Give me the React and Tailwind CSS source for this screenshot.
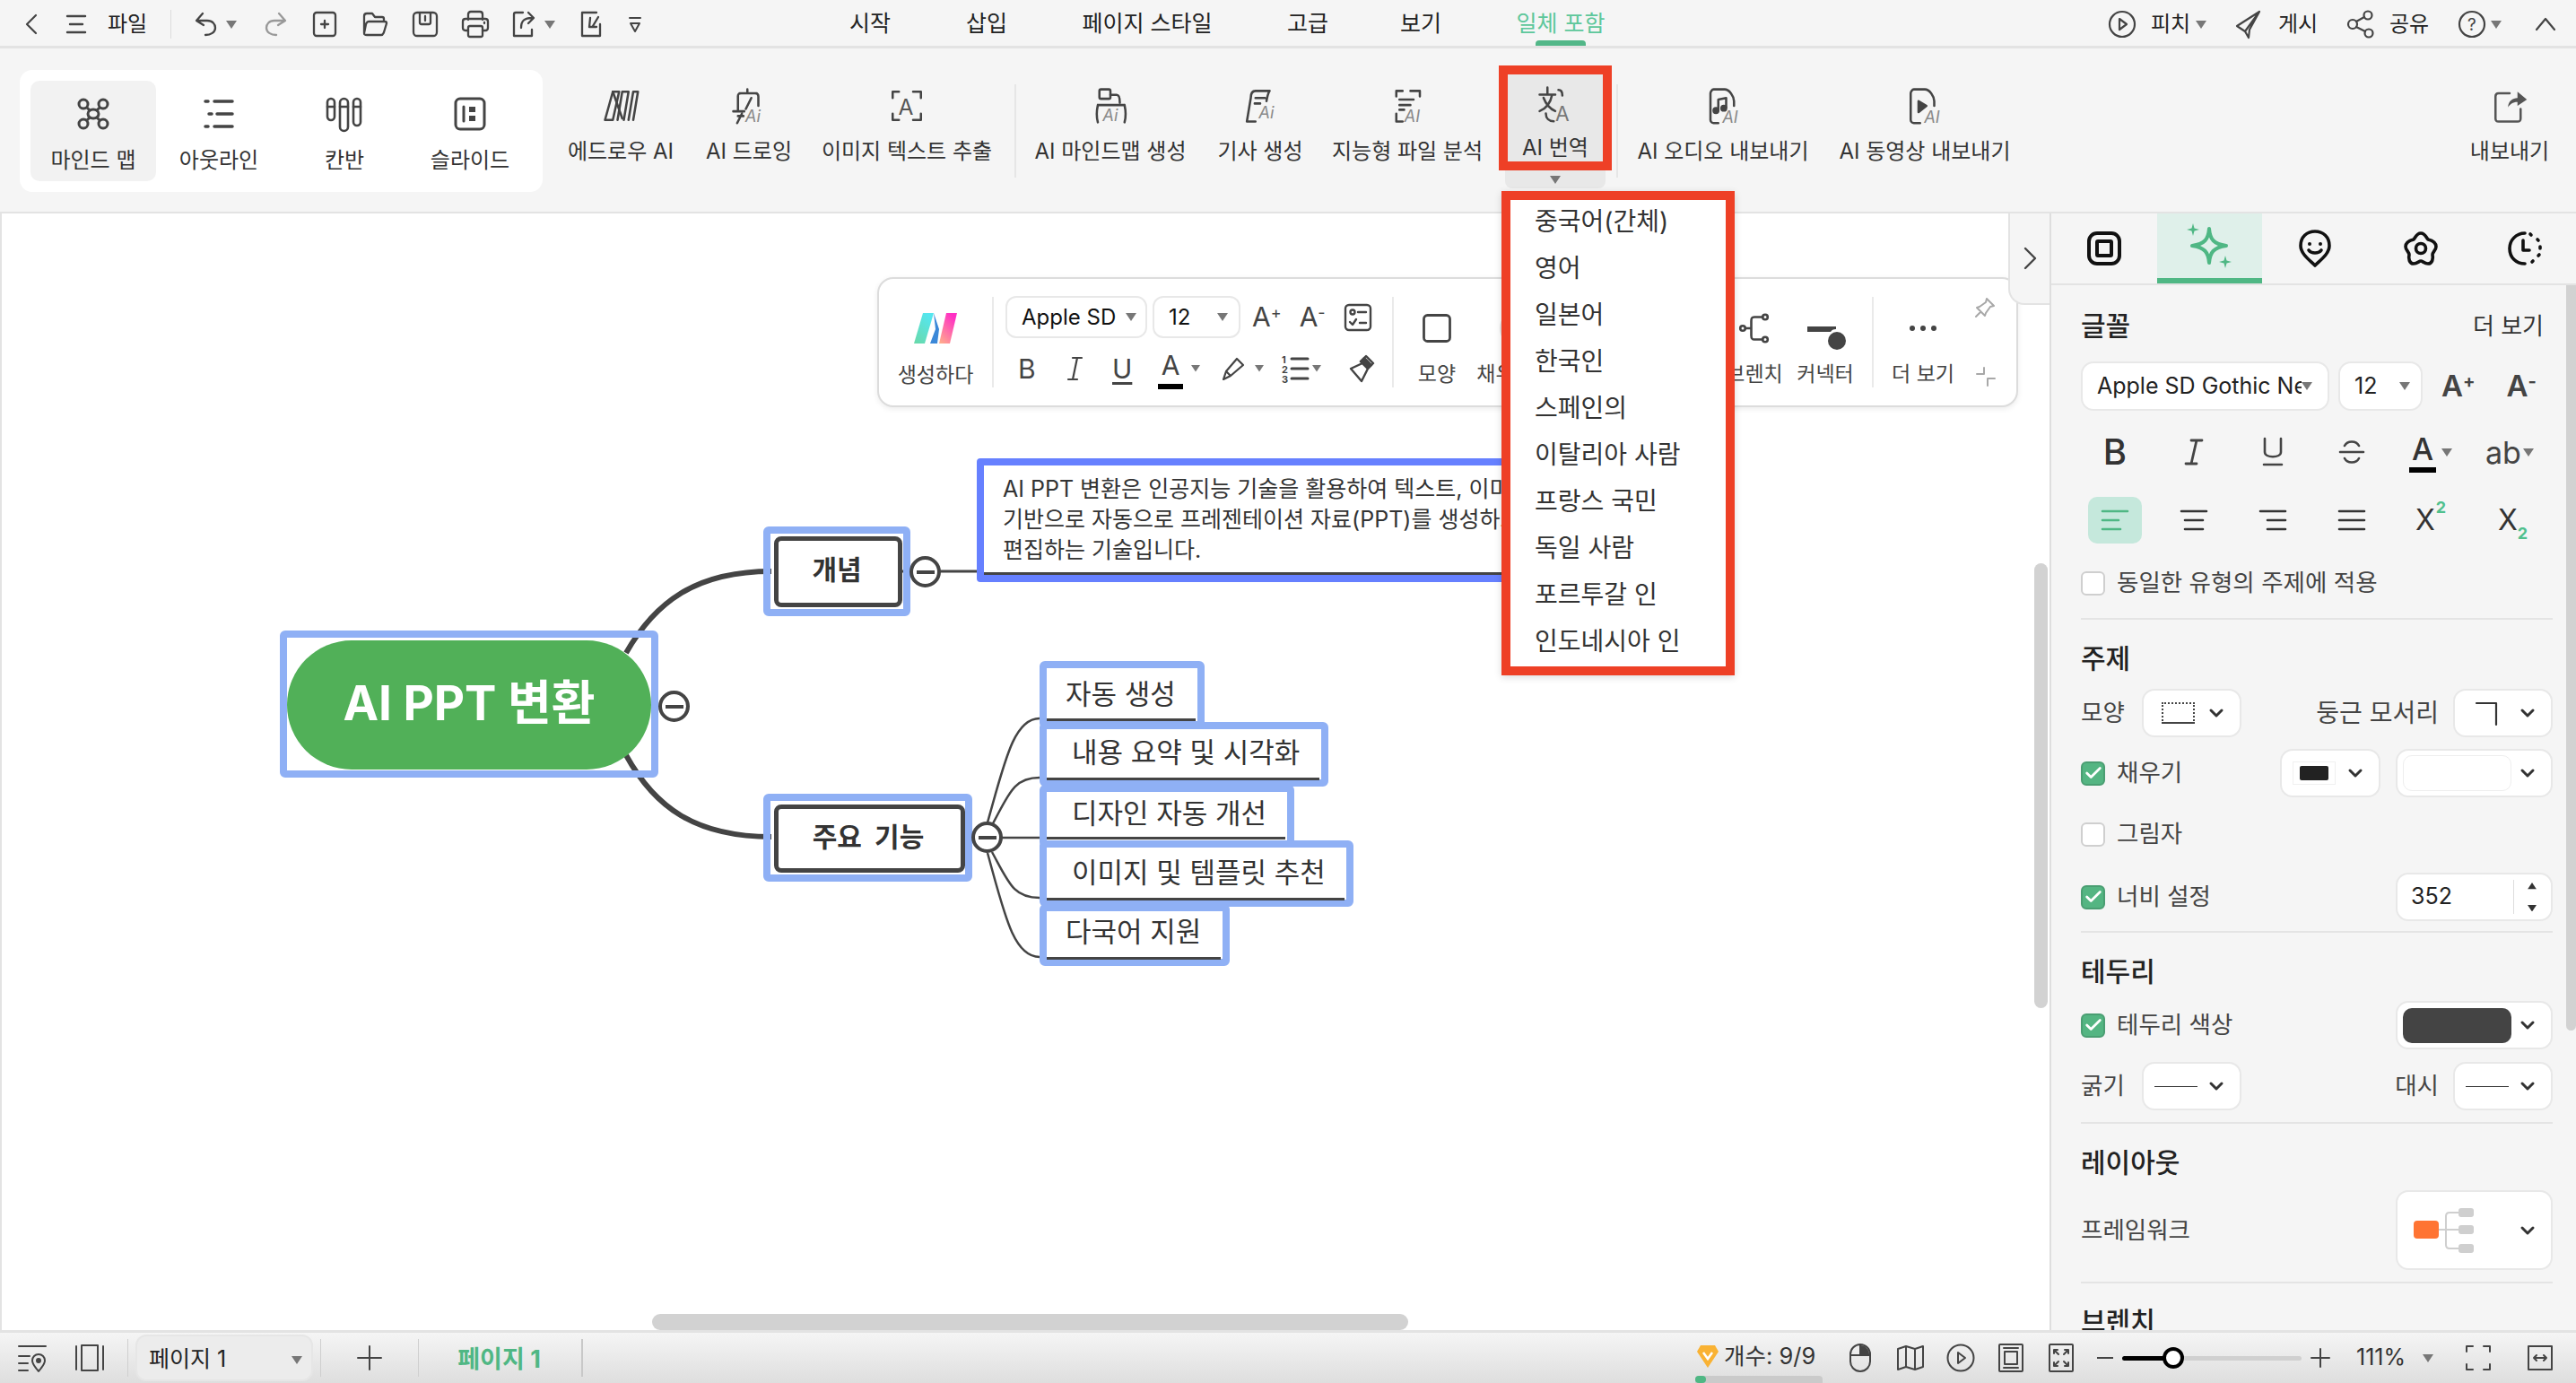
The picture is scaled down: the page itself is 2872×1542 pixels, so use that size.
import { ChevronDown, Check as CheckIcon } from "lucide-react";

const Svg = ({ s = 40, h, sw = 2.5, c = "#444", vb, children }) => (
  <svg
    width={s}
    height={h || s}
    viewBox={vb || `0 0 ${s} ${h || s}`}
    fill="none"
    stroke={c}
    strokeWidth={sw}
    strokeLinecap="round"
    strokeLinejoin="round"
    overflow="visible"
  >
    {children}
  </svg>
);

const Caret = ({ w = 12, c = "#777" }) => (
  <svg width={w} height={w * 0.75} viewBox="0 0 12 9">
    <path d="M0 0H12L6 9Z" fill={c} />
  </svg>
);

const Ai = ({ x, y, t = "Ai", size = 21 }) => (
  <text
    x={x}
    y={y}
    fontSize={size}
    fontStyle="italic"
    fontFamily="Inter, sans-serif"
    fill="#8a8a8a"
    stroke="none"
  >
    {t}
  </text>
);

/* ribbon icons: drawn on a 48 box and shown at 42 */
const RIcon = ({ children, c }) => (
  <Svg s={42} sw={2.9} c={c} vb="0 0 48 48">
    {children}
  </Svg>
);

const MindIcon = () => (
  <Svg s={38} sw={3}>
    <circle cx="8" cy="8" r="5" />
    <circle cx="30" cy="8" r="5" />
    <circle cx="8" cy="30" r="5" />
    <circle cx="30" cy="30" r="5" />
    <path d="M12 12L15 15M26 12L23 15M12 26L15 23M26 26L23 23" />
    <ellipse cx="19" cy="19" rx="6" ry="5" />
  </Svg>
);
const OutlineIcon = () => (
  <Svg s={38} sw={3.5}>
    <path d="M4 5H7M14 5H34M8 19H11M17 19H34M4 33H7M14 33H34" />
  </Svg>
);
const KanbanIcon = () => (
  <Svg s={42} sw={2.6}>
    <rect x="2" y="4" width="8" height="24" rx="4" />
    <rect x="16" y="4" width="9" height="36" rx="4.5" />
    <rect x="31" y="4" width="8" height="30" rx="4" />
    <path d="M2 13H10M16 13H25M31 13H39" />
  </Svg>
);
const SlideIcon = () => (
  <Svg s={38} sw={3}>
    <rect x="3" y="2" width="32" height="34" rx="5" />
    <path d="M12 11V27" />
    <rect x="18" y="11" width="7" height="6" fill="#444" stroke="none" />
    <rect x="18" y="21" width="7" height="6" fill="#444" stroke="none" />
  </Svg>
);
const EdrawIcon = () => (
  <RIcon>
    <path d="M4 42L14 6H22L14 42ZM20 42L26 6H34L28 42M34 42L40 6H46L40 42" />
    <path d="M14 6L26 40" />
  </RIcon>
);
const DrawIcon = () => (
  <RIcon>
    <path d="M12 8H34M22 3V8M14 8C10 8 10 10 10 12V30M32 8C35 8 36 10 36 12V24" />
    <path d="M27 14L20 28" />
    <path d="M4 31H18M10 37H17M9 46L15 34" />
    <Ai x={19} y={45} />
  </RIcon>
);
const ExtractIcon = () => (
  <RIcon>
    <path d="M6 14V6H14M32 6H42V14M6 34V42H14M32 42H42V34" />
    <text x="13" y="35" fontSize="28" fontFamily="Inter, sans-serif" fill="#555" stroke="none">
      A
    </text>
  </RIcon>
);
const AiMindIcon = () => (
  <RIcon>
    <rect x="10" y="3" width="14" height="12" rx="2" />
    <path d="M24 10H32C36 10 36 16 36 20M8 23H42M8 23C6 32 6 38 8 45M42 23C44 32 44 38 42 45" />
    <Ai x={14} y={43} />
  </RIcon>
);
const ArticleIcon = () => (
  <RIcon>
    <path d="M36 5H18C14 5 12 8 12 14L7 44H18M36 5C34 8 33 12 32 18M18 14H30M17 21H24" />
    <Ai x={22} y={40} />
  </RIcon>
);
const AnalysisIcon = () => (
  <RIcon>
    <path d="M10 12V5H18M28 5H40V12M10 34V44H18M14 16H32M14 23H28M14 29H20" />
    <Ai x={20} y={44} t="AI" />
  </RIcon>
);
const TranslateIcon = () => (
  <RIcon>
    <path d="M4 12H24M14 3V12M20 12C18 22 12 30 4 33M9 16C12 24 17 30 24 33" />
    <path d="M28 6C32 6 33 10 33 13M12 36C12 42 16 46 22 46" />
    <text x="24" y="46" fontSize="26" fontFamily="Inter, sans-serif" fill="#777" stroke="none">
      A
    </text>
  </RIcon>
);
const AudioIcon = () => (
  <RIcon>
    <path d="M18 46H12C10 46 8 44 8 42V8C8 6 10 3 12 3H26C32 3 38 12 38 18V24" />
    <path d="M18 30V16L28 14V26" />
    <circle cx="15" cy="30" r="3" fill="#444" />
    <circle cx="25" cy="27" r="3" fill="#444" />
    <Ai x={23} y={46} t="AI" />
  </RIcon>
);
const VideoIcon = () => (
  <RIcon>
    <path d="M18 46H10C8 46 6 44 6 42V8C6 6 8 3 10 3H24C30 3 36 12 36 18V24" />
    <path d="M16 18L26 24L16 32Z" fill="#444" />
    <Ai x={23} y={46} t="AI" />
  </RIcon>
);
const ExportIcon = () => (
  <RIcon c="#555">
    <path d="M24 8H10C7 8 6 10 6 12V40C6 44 8 44 10 44H34C38 44 38 42 38 40V28" />
    <path d="M22 26C22 18 28 14 34 14V6L46 16L34 24V19C28 19 24 22 22 26Z" fill="#555" stroke="none" />
  </RIcon>
);

/* right panel tab icons */
const TabFrame = () => (
  <Svg s={40} sw={4} c="#111">
    <rect x="3" y="3" width="34" height="34" rx="9" />
    <rect x="12" y="12" width="16" height="16" rx="1" />
  </Svg>
);
const TabSpark = () => (
  <svg width="52" height="52" viewBox="0 0 52 52" fill="none" stroke="#4fb784" strokeWidth="4">
    <path d="M26 7C27 19 31 24 45 26C31 28 27 33 26 45C25 33 21 28 7 26C21 24 25 19 26 7Z" strokeLinejoin="round" />
    <path d="M8 1L9.5 6.5L15 8L9.5 9.5L8 15L6.5 9.5L1 8L6.5 6.5Z" fill="#4fb784" stroke="none" />
    <path d="M44 37L45.5 42.5L51 44L45.5 45.5L44 51L42.5 45.5L37 44L42.5 42.5Z" fill="#4fb784" stroke="none" />
  </svg>
);
const TabPin = () => (
  <Svg s={40} sw={3.6} c="#111" h={44}>
    <path d="M20 41C14 35 4 28 4 19C4 9 11 3 20 3C29 3 36 9 36 19C36 28 26 35 20 41Z" />
    <circle cx="14" cy="17" r="2" fill="#111" stroke="none" />
    <circle cx="26" cy="17" r="2" fill="#111" stroke="none" />
    <path d="M13 24C16 28 24 28 27 24" />
  </Svg>
);
const TabFlower = () => (
  <Svg s={40} sw={3.6} c="#111">
    <path d="M20 3C25 3 26 8 28 10C32 11 37 13 37 18C37 22 33 24 33 27C34 31 33 37 28 37C24 37 22 34 20 34C18 34 16 37 12 37C7 37 6 31 7 27C7 24 3 22 3 18C3 13 8 11 12 10C14 8 15 3 20 3Z" />
    <circle cx="20" cy="20" r="5.5" />
  </Svg>
);
const TabClock = () => (
  <Svg s={40} sw={3.6} c="#111">
    <path d="M20 3C10 3 3 11 3 20C3 30 10 37 20 37" />
    <path d="M26 4L27 5M34 10L35 11M37 18V20M36 27L35 28M29 34L28 35" />
    <path d="M18 11V22H25" />
  </Svg>
);

/* small shared widgets */
const Checkbox = ({ on }) =>
  on ? (
    <span className="flex h-[27px] w-[27px] shrink-0 items-center justify-center rounded-[6px] border-2 border-[#4a9e72] bg-[#54b582]">
      <CheckIcon size={22} color="#fff" strokeWidth={3} />
    </span>
  ) : (
    <span className="h-[27px] w-[27px] shrink-0 rounded-[6px] border-2 border-[#cfcfcf] bg-white" />
  );

const Chev = () => <ChevronDown size={24} color="#333" strokeWidth={3} />;

const Title = ({ children }) => (
  <div className="flex h-[46px] items-center text-[30px] font-medium text-[#222]">{children}</div>
);

const Divider = ({ className }) => <div className={`h-[2px] bg-[#e4e4e4] ${className}`} />;

const GroupItem = ({ icon, label, active }) => (
  <div
    className={`flex h-[112px] w-[140px] shrink-0 flex-col items-center rounded-[10px] pt-[15px] ${
      active ? "bg-[#f2f2f2]" : ""
    }`}
  >
    <div className="flex h-[44px] items-center justify-center">{icon}</div>
    <div className="mt-[15px] h-[30px] text-[24px] leading-[30px] whitespace-nowrap text-[#333]">{label}</div>
  </div>
);

const RibbonItem = ({ icon, label, className }) => (
  <div className={`flex h-[117px] shrink-0 flex-col items-center pt-[21px] ${className}`}>
    <div className="flex h-[48px] items-center justify-center">{icon}</div>
    <div className="mt-[12px] h-[30px] text-[24px] leading-[30px] whitespace-nowrap text-[#333]">{label}</div>
  </div>
);

const languages = [
  "중국어(간체)",
  "영어",
  "일본어",
  "한국인",
  "스페인의",
  "이탈리아 사람",
  "프랑스 국민",
  "독일 사람",
  "포르투갈 인",
  "인도네시아 인",
];

const TopBar = () => (
  <div className="flex h-[54px] shrink-0 items-center border-b-[3px] border-[#e3e3e3] bg-[#f5f5f5] pl-[16px] pr-[14px] pt-[3px] text-[#222]">
    <div className="flex w-[40px] justify-center">
      <Svg s={28} sw={2.2}>
        <path d="M18 4L8 14L18 24" />
      </Svg>
    </div>
    <div className="flex w-[58px] justify-center">
      <Svg s={28} sw={2.4}>
        <path d="M4 5H24M7 14H21M4 23H24" />
      </Svg>
    </div>
    <div className="w-[56px] text-center text-[24px]">파일</div>
    <div className="ml-[20px] h-[32px] w-px bg-[#dcdcdc]" />
    <div className="ml-[21px] flex w-[36px] justify-center">
      <Svg s={30} sw={2.3}>
        <path d="M11 3L4 11L12 16M5 11H16C22 11 25 15 25 19C25 24 20 27 14 27" />
      </Svg>
    </div>
    <div className="flex w-[20px] justify-center">
      <Caret />
    </div>
    <div className="ml-[9px] flex w-[60px] justify-center">
      <Svg s={30} sw={2.3} c="#999">
        <path d="M19 3L26 11L18 16M25 11H14C8 11 5 15 5 19C5 24 10 27 16 27" />
      </Svg>
    </div>
    <div className="flex w-[50px] justify-center">
      <Svg s={30} sw={2.3}>
        <rect x="3" y="2" width="24" height="26" rx="3" />
        <path d="M15 11V19M11 15H19" />
      </Svg>
    </div>
    <div className="flex w-[62px] justify-center">
      <Svg s={32} sw={2.3}>
        <path d="M4 26V7C4 5 5 4 7 4H13L16 8H24C26 8 26 9 26 10V13M4 26C4 28 5 28 7 28H23C25 28 25 27 26 25L29 15C29 13 28 13 27 13H9C7 13 7 14 6 16Z" />
      </Svg>
    </div>
    <div className="flex w-[50px] justify-center">
      <Svg s={30} sw={2.3}>
        <rect x="2" y="2" width="26" height="26" rx="4" />
        <path d="M9 3V13C9 15 10 15 11 15H19C20 15 21 15 21 13V3M15 6V11" />
      </Svg>
    </div>
    <div className="flex w-[62px] justify-center">
      <Svg s={32} sw={2.3}>
        <path d="M8 11V5C8 3 9 2 11 2H21C23 2 24 3 24 5V11M8 23H5C3 23 2 22 2 20V13C2 11 3 10 5 10H27C29 10 30 11 30 13V20C30 22 29 23 27 23H24" />
        <rect x="8" y="18" width="16" height="12" rx="2" />
        <path d="M26 14V15" />
      </Svg>
    </div>
    <div className="ml-[4px] flex w-[40px] justify-center">
      <Svg s={32} sw={2.3}>
        <path d="M14 3H6C5 3 4 4 4 5V29H24V22M12 20C12 12 16 9 24 9M20 3L26 9L20 15" />
      </Svg>
    </div>
    <div className="flex w-[16px] justify-center">
      <Caret />
    </div>
    <div className="flex w-[80px] justify-center">
      <Svg s={32} sw={2.3}>
        <path d="M20 3H4V29H24V16M22 8L16 18M13 9L12 19L20 19" />
      </Svg>
    </div>
    <div className="flex w-[14px] justify-center">
      <Svg s={14} h={22} sw={2}>
        <path d="M1 4H13M2 10H12L7 19Z" />
      </Svg>
    </div>

    <div className="ml-[190px] w-[130px] text-center text-[25px]">시작</div>
    <div className="w-[130px] text-center text-[25px]">삽입</div>
    <div className="w-[228px] text-center text-[25px]">페이지 스타일</div>
    <div className="w-[130px] text-center text-[25px]">고급</div>
    <div className="w-[122px] text-center text-[25px]">보기</div>
    <div className="relative flex h-full w-[190px] items-center justify-center text-[25px] text-[#5dc79b]">
      일체 포함
      <span className="absolute bottom-0 left-[67px] h-[6px] w-[56px] rounded-t-[4px] bg-[#52b788]" />
    </div>

    <div className="ml-auto flex w-[52px] justify-center">
      <Svg s={32} sw={2.2}>
        <circle cx="16" cy="16" r="14" />
        <path d="M13 10L21 16L13 22Z" />
      </Svg>
    </div>
    <div className="w-[56px] text-center text-[24px]">피치</div>
    <div className="flex w-[12px] justify-center">
      <Caret />
    </div>
    <div className="ml-[22px] flex w-[50px] justify-center">
      <Svg s={32} sw={2.2}>
        <path d="M28 2L3 18L12 24L16 31L17 22L28 2ZM12 24L28 2" />
      </Svg>
    </div>
    <div className="w-[60px] text-center text-[24px]">게시</div>
    <div className="ml-[20px] flex w-[40px] justify-center">
      <Svg s={32} sw={2.2}>
        <circle cx="7" cy="16" r="5" />
        <circle cx="24" cy="6" r="4.5" />
        <circle cx="25" cy="26" r="4.5" />
        <path d="M11 13L20 8M11 19L21 24" />
      </Svg>
    </div>
    <div className="w-[68px] text-center text-[24px]">공유</div>
    <div className="ml-[16px] flex w-[40px] justify-center">
      <Svg s={32} sw={2.2}>
        <circle cx="16" cy="16" r="14" />
        <text x="11" y="23" fontSize="19" fontFamily="Inter, sans-serif" fill="#444" stroke="none">
          ?
        </text>
      </Svg>
    </div>
    <div className="flex w-[14px] justify-center">
      <Caret />
    </div>
    <div className="ml-[28px] flex w-[40px] justify-center">
      <Svg s={28} sw={2.2}>
        <path d="M4 20L14 8L24 20" />
      </Svg>
    </div>
  </div>
);

const Ribbon = () => (
  <div className="flex h-[184px] shrink-0 items-start border-b-[2px] border-[#e3e3e3] bg-[#f5f5f5] pl-[22px] pr-[24px]">
    <div className="mt-[24px] flex h-[136px] w-[583px] shrink-0 items-center rounded-[14px] bg-white pl-[12px]">
      <GroupItem icon={<MindIcon />} label="마인드 맵" active />
      <GroupItem icon={<OutlineIcon />} label="아웃라인" />
      <GroupItem icon={<KanbanIcon />} label="칸반" />
      <GroupItem icon={<SlideIcon />} label="슬라이드" />
    </div>
    <div className="ml-[15px] mt-[19px] flex">
      <RibbonItem icon={<EdrawIcon />} label="에드로우 AI" className="w-[144px]" />
      <RibbonItem icon={<DrawIcon />} label="AI 드로잉" className="w-[142px]" />
      <RibbonItem icon={<ExtractIcon />} label="이미지 텍스트 추출" className="w-[210px]" />
      <div className="ml-[15px] mt-[21px] h-[104px] w-[2px] bg-[#e6e6e6]" />
      <RibbonItem icon={<AiMindIcon />} label="AI 마인드맵 생성" className="w-[210px]" />
      <RibbonItem icon={<ArticleIcon />} label="기사 생성" className="w-[124px]" />
      <RibbonItem icon={<AnalysisIcon />} label="지능형 파일 분석" className="w-[204px]" />
      <div className="relative w-[126px] shrink-0">
        <div className="flex h-[117px] flex-col items-center border-[10px] border-[#ee4026] bg-[#e8e8e8] pt-[11px]">
          <div className="flex h-[48px] items-center justify-center">
            <TranslateIcon />
          </div>
          <div className="mt-[12px] text-[24px] leading-[30px] whitespace-nowrap text-[#333]">AI 번역</div>
        </div>
        <div className="mx-[7px] flex h-[20px] items-center justify-center rounded-b-[8px] bg-[#e8e8e8]">
          <Caret />
        </div>
      </div>
      <div className="ml-[5px] mt-[21px] h-[104px] w-[2px] bg-[#e6e6e6]" />
      <RibbonItem icon={<AudioIcon />} label="AI 오디오 내보내기" className="ml-[3px] w-[228px]" />
      <RibbonItem icon={<VideoIcon />} label="AI 동영상 내보내기" className="w-[222px]" />
    </div>
    <div className="ml-auto mt-[19px]">
      <RibbonItem icon={<ExportIcon />} label="내보내기" className="w-[100px]" />
    </div>
  </div>
);

const FloatingBar = () => (
  <div className="absolute left-[978px] top-[71px] z-10 flex h-[145px] w-[1272px] items-stretch rounded-[18px] border-2 border-[#dcdcdc] bg-white shadow-[0_2px_6px_rgba(0,0,0,0.08)]">
    <div className="flex w-[126px] shrink-0 flex-col items-center pt-[38px]">
      <svg width="48" height="34" viewBox="0 0 48 34">
        <defs>
          <linearGradient id="mLeft" x1="0" y1="1" x2="0.6" y2="0">
            <stop offset="0" stopColor="#6ad9a8" />
            <stop offset="1" stopColor="#55e6ee" />
          </linearGradient>
          <linearGradient id="mRight" x1="0" y1="1" x2="0.6" y2="0">
            <stop offset="0" stopColor="#ffb28a" />
            <stop offset="1" stopColor="#ff2fc4" />
          </linearGradient>
        </defs>
        <path d="M10 0H22L12 34H0Z" fill="url(#mLeft)" />
        <path d="M22 0L28 18L26 34H18L24 18Z" fill="#3b88d8" />
        <path d="M36 0H48L40 34H28Z" fill="url(#mRight)" />
      </svg>
      <div className="mt-[20px] text-[23px] leading-[30px] text-[#444]">생성하다</div>
    </div>
    <div className="my-[20px] w-[2px] bg-[#eaeaea]" />
    <div className="w-[444px] shrink-0 pl-[13px] pt-[19px]">
      <div className="flex h-[47px] items-center">
        <div className="flex h-[47px] w-[158px] items-center justify-between rounded-[12px] border-2 border-[#e8e8e8] pl-[16px] pr-[10px] text-[24px] text-[#111]">
          Apple SD
          <Caret />
        </div>
        <div className="ml-[6px] flex h-[47px] w-[98px] items-center justify-between rounded-[12px] border-2 border-[#e8e8e8] pl-[16px] pr-[12px] text-[24px] text-[#111]">
          12
          <Caret />
        </div>
        <div className="ml-[13px] text-[30px] text-[#444]">
          A<sup className="text-[18px]">+</sup>
        </div>
        <div className="ml-[20px] text-[30px] text-[#444]">
          A<sup className="text-[18px]">-</sup>
        </div>
        <div className="ml-[20px]">
          <Svg s={32} sw={2.4} vb="0 0 32 32">
            <rect x="2" y="2" width="28" height="28" rx="4" />
            <circle cx="10" cy="10" r="2.5" />
            <path d="M16 10H25M7 21L10 24L14 18M18 22H25" />
          </Svg>
        </div>
      </div>
      <div className="mt-[10px] flex h-[48px] items-center text-[#444]">
        <div className="ml-[14px] w-[50px] text-[30px]">B</div>
        <div className="ml-[1px] w-[50px]">
          <Svg s={24} h={30} sw={2.2}>
            <path d="M10 3H20M15 3L10 27M5 27H15" />
          </Svg>
        </div>
        <div className="ml-[4px] w-[44px] text-[30px] underline underline-offset-4">U</div>
        <div className="ml-[6px] relative h-[46px] w-[30px] text-[30px] leading-[38px] text-center">
          A<span className="absolute bottom-0 left-[1px] h-[6px] w-[28px] bg-black" />
        </div>
        <div className="ml-[8px]">
          <Caret w={10} />
        </div>
        <div className="ml-[23px]">
          <Svg s={28} sw={2.2}>
            <path d="M18 3L25 10L11 22L6 17ZM6 17L3 26L11 22" />
          </Svg>
        </div>
        <div className="ml-[10px]">
          <Caret w={10} />
        </div>
        <div className="ml-[20px]">
          <Svg s={32} sw={3}>
            <path d="M11 5H29M11 16H29M11 27H29" />
            <text x="0" y="10" fontSize="11" fontWeight="700" fontFamily="Inter, sans-serif" fill="#444" stroke="none">1</text>
            <text x="0" y="21" fontSize="11" fontWeight="700" fontFamily="Inter, sans-serif" fill="#444" stroke="none">2</text>
            <text x="0" y="32" fontSize="11" fontWeight="700" fontFamily="Inter, sans-serif" fill="#444" stroke="none">3</text>
          </Svg>
        </div>
        <div className="ml-[2px]">
          <Caret w={10} />
        </div>
        <div className="ml-[28px]">
          <Svg s={32} sw={2.4}>
            <path d="M22 2L30 10L24 16L16 8ZM18 10L5 16L17 30L24 16" fill="none" />
            <path d="M20 4L28 12L24 16L16 8Z" fill="#444" />
          </Svg>
        </div>
      </div>
    </div>
    <div className="my-[20px] w-[2px] bg-[#eaeaea]" />
    <div className="ml-[5px] flex w-[86px] shrink-0 flex-col items-center pt-[39px]">
      <Svg s={32} sw={2.8}>
        <rect x="1.5" y="1.5" width="29" height="29" rx="4" />
      </Svg>
      <div className="mt-[20px] text-[23px] leading-[30px] text-[#444]">모양</div>
    </div>
    <div className="flex w-[66px] shrink-0 flex-col items-center pt-[34px]">
      <div className="ml-[30px] h-[42px] w-[42px] shrink-0 rounded-full border-2 border-[#e6e6e6]" />
      <div className="mt-[15px] text-[23px] leading-[30px] whitespace-nowrap text-[#444]">채우기</div>
    </div>
    <div className="ml-auto flex w-[80px] shrink-0 flex-col items-center pt-[39px]">
      <Svg s={34} h={32} sw={2.6}>
        <circle cx="4" cy="16" r="2.8" fill="#fff" />
        <circle cx="29" cy="3.5" r="2.8" fill="#fff" />
        <circle cx="29" cy="28.5" r="2.8" fill="#fff" />
        <path d="M7 16H13M26 3.5H17C14 3.5 13.5 5 13.5 8V24C13.5 27 14 28.5 17 28.5H26" />
      </Svg>
      <div className="mt-[20px] text-[23px] leading-[30px] whitespace-nowrap text-[#444]">브렌치</div>
    </div>
    <div className="flex w-[78px] shrink-0 flex-col items-center pt-[39px]">
      <svg width="46" height="42" viewBox="0 0 46 42">
        <path d="M3 14H35V17C32 17 30 18 29 20H3Z" fill="#444" />
        <circle cx="36" cy="30" r="10" fill="#444" />
      </svg>
      <div className="mt-[10px] text-[23px] leading-[30px] whitespace-nowrap text-[#444]">커넥터</div>
    </div>
    <div className="my-[20px] ml-[13px] w-[2px] bg-[#eaeaea]" />
    <div className="relative w-[159px] shrink-0">
      <div className="flex w-[110px] flex-col items-center pt-[39px]">
        <svg width="32" height="32" viewBox="0 0 32 32">
          <circle cx="4" cy="16" r="3" fill="#444" />
          <circle cx="16" cy="16" r="3" fill="#444" />
          <circle cx="28" cy="16" r="3" fill="#444" />
        </svg>
        <div className="mt-[20px] text-[23px] leading-[30px] whitespace-nowrap text-[#444]">더 보기</div>
      </div>
      <div className="absolute left-[112px] top-[20px]">
        <Svg s={24} sw={2} c="#a8a8a8">
          <path d="M14 2L22 10L18 11L13 18L12 21L3 12L6 11L13 6ZM7 17L2 22" />
        </Svg>
      </div>
      <div className="absolute left-[114px] top-[98px]">
        <Svg s={22} sw={2} c="#a8a8a8">
          <path d="M9 1V8H1M13 21V13H21" />
        </Svg>
      </div>
    </div>
  </div>
);

const subNodes = [
  {
    label: "자동 생성",
    box: "left-[1159px] top-[499px] h-[75px] w-[184px] pl-[21px] pt-[9px]",
    line: "top-[56px]",
  },
  {
    label: "내용 요약 및 시각화",
    box: "left-[1159px] top-[567px] h-[72px] w-[322px] pl-[28px] pt-[6px]",
    line: "top-[54px]",
  },
  {
    label: "디자인 자동 개선",
    box: "left-[1159px] top-[637px] h-[70px] w-[284px] pl-[28px] pt-[4px]",
    line: "top-[50px]",
  },
  {
    label: "이미지 및 템플릿 추천",
    box: "left-[1159px] top-[699px] h-[74px] w-[350px] pl-[28px] pt-[8px]",
    line: "top-[56px]",
  },
  {
    label: "다국어 지원",
    box: "left-[1159px] top-[770px] h-[69px] w-[212px] pl-[21px] pt-[3px]",
    line: "top-[51px]",
  },
];

const Collapse = ({ className }) => (
  <div
    className={`absolute flex h-[35px] w-[35px] items-center justify-center rounded-full border-[4px] border-[#444] bg-white ${className}`}
  >
    <span className="h-[4px] w-[20px] bg-[#444]" />
  </div>
);

const MindMap = () => (
  <>
    <svg
      className="absolute left-0 top-0"
      width="2285"
      height="1245"
      viewBox="0 238 2285 1245"
      fill="none"
      stroke="#444"
    >
      <path d="M698 728C730 672 775 637 860 637" strokeWidth="6" />
      <path d="M698 842C730 900 775 933 860 933" strokeWidth="6" />
      <path d="M1006 637H1014M1048 637H1095" strokeWidth="3" />
      <path d="M1076 934H1159" strokeWidth="2.5" />
      <path d="M1101 917C1120 850 1130 801 1159 801" strokeWidth="2.5" />
      <path d="M1106 920C1125 885 1130 867 1159 867" strokeWidth="2.5" />
      <path d="M1106 950C1125 985 1130 1001 1159 1001" strokeWidth="2.5" />
      <path d="M1101 951C1120 1020 1130 1067 1159 1067" strokeWidth="2.5" />
    </svg>

    <div className="absolute left-[312px] top-[465px] h-[164px] w-[422px] rounded-[6px] border-[8px] border-[#8fb0f5]" />
    <div className="absolute left-[320px] top-[476px] flex h-[144px] w-[406px] items-center justify-center rounded-[72px] bg-[#51b058] pb-[2px] text-[53px] font-bold text-white">
      AI PPT 변환
    </div>
    <Collapse className="left-[734px] top-[532px]" />

    <div className="absolute left-[851px] top-[349px] h-[100px] w-[164px] rounded-[6px] border-[8px] border-[#8fb0f5]" />
    <div className="absolute left-[863px] top-[360px] flex h-[79px] w-[143px] items-center justify-center rounded-[8px] border-[5px] border-[#444] bg-white pb-[5px] pr-[3px] text-[30px] font-bold text-[#333]">
      개념
    </div>
    <Collapse className="left-[1014px] top-[382px]" />

    <div className="absolute left-[851px] top-[647px] h-[98px] w-[233px] rounded-[6px] border-[8px] border-[#8fb0f5]" />
    <div className="absolute left-[863px] top-[659px] flex h-[76px] w-[213px] items-center justify-center rounded-[8px] border-[5px] border-[#444] bg-white pb-[4px] pr-[3px] text-[30px] font-bold whitespace-pre text-[#333]">
      주요  기능
    </div>
    <Collapse className="left-[1083px] top-[678px]" />

    {subNodes.map((n) => (
      <div
        key={n.label}
        className={`absolute rounded-[6px] border-[8px] border-[#8fb0f5] bg-white text-[31px] leading-[40px] whitespace-nowrap text-[#333] ${n.box}`}
      >
        {n.label}
        <span className={`absolute left-0 right-[2px] h-[3px] bg-[#444] ${n.line}`} />
      </div>
    ))}

    <div className="absolute left-[1089px] top-[273px] h-[138px] w-[800px] rounded-[4px] border-[8px] border-[#6680ff] bg-white pl-[21px] pt-[9px] text-[25px] leading-[34px] whitespace-nowrap text-[#333]">
      <div>AI PPT 변환은 인공지능 기술을 활용하여 텍스트, 이미지, 데이터를</div>
      <div>기반으로 자동으로 프레젠테이션 자료(PPT)를 생성하고</div>
      <div>편집하는 기술입니다.</div>
      <span className="absolute bottom-0 left-0 right-0 h-[3px] bg-[#444]" />
    </div>
  </>
);

const FormatRow = () => (
  <div className="-ml-[6px] mt-[23px] flex h-[46px] items-center text-[#333]">
    <div className="w-[88px] text-center text-[40px] font-medium">B</div>
    <div className="flex w-[88px] justify-center">
      <Svg s={28} h={32} sw={2.8}>
        <path d="M11 3H23M17 3L11 29M5 29H17" />
      </Svg>
    </div>
    <div className="flex w-[88px] justify-center">
      <Svg s={24} h={34} sw={2.6}>
        <path d="M3 2V17C3 24 21 24 21 17V2M2 31H22" />
      </Svg>
    </div>
    <div className="flex w-[88px] justify-center">
      <Svg s={30} h={32} sw={2.6}>
        <path d="M2 16H28M23 9C20 3 10 3 7 9M7 23C10 29 20 29 23 23" />
      </Svg>
    </div>
    <div className="flex w-[88px] items-center justify-center">
      <span className="relative h-[46px] w-[30px] text-center text-[34px] font-medium leading-[40px]">
        A<span className="absolute bottom-0 left-0 h-[6px] w-[30px] bg-black" />
      </span>
      <span className="ml-[6px]">
        <Caret />
      </span>
    </div>
    <div className="flex w-[88px] items-center justify-center">
      <span className="text-[34px] text-[#444]">ab</span>
      <span className="ml-[2px]">
        <Caret />
      </span>
    </div>
  </div>
);

const AlignRow = () => (
  <div className="mt-[27px] flex h-[52px] items-center">
    <div className="ml-[8px] flex h-[52px] w-[60px] items-center justify-center rounded-[10px] bg-[#c5e8dc]">
      <Svg s={28} sw={2.6} c="#4fb784">
        <path d="M0 4H28M0 14H18M0 24H20" />
      </Svg>
    </div>
    <div className="ml-[28px] flex w-[60px] justify-center">
      <Svg s={28} sw={2.6} c="#333">
        <path d="M0 4H28M4 14H24M4 24H24" />
      </Svg>
    </div>
    <div className="ml-[28px] flex w-[60px] justify-center">
      <Svg s={28} sw={2.6} c="#333">
        <path d="M0 4H28M8 14H28M8 24H28" />
      </Svg>
    </div>
    <div className="ml-[28px] flex w-[60px] justify-center">
      <Svg s={28} sw={2.6} c="#333">
        <path d="M0 4H28M0 14H28M0 24H28" />
      </Svg>
    </div>
    <div className="relative ml-[22px] w-[60px] text-center text-[32px] text-[#333]">
      X<span className="absolute right-[7px] top-[-4px] text-[18px] font-bold text-[#4fc08d]">2</span>
    </div>
    <div className="relative ml-[32px] w-[60px] text-center text-[32px] text-[#333]">
      X<span className="absolute bottom-[-4px] right-[8px] text-[18px] font-bold text-[#4fc08d]">2</span>
    </div>
  </div>
);

const RightPanel = () => (
  <div className="flex w-[587px] shrink-0 flex-col border-l-2 border-[#dedede] bg-[#f5f5f5]">
    <div className="flex h-[80px] shrink-0 border-b-2 border-[#e3e3e3]">
      <div className="flex w-[118px] items-center justify-center">
        <TabFrame />
      </div>
      <div className="flex w-[118px] items-center justify-center border-b-[6px] border-[#4fb784] bg-[#dff0ea]">
        <TabSpark />
      </div>
      <div className="flex w-[118px] items-center justify-center">
        <TabPin />
      </div>
      <div className="flex w-[118px] items-center justify-center">
        <TabFlower />
      </div>
      <div className="flex w-[115px] items-center justify-center">
        <TabClock />
      </div>
    </div>
    <div className="relative flex-1 overflow-hidden pl-[33px] pr-[26px] text-[26.5px] text-[#444]">
      <div className="absolute right-0 top-0 h-[831px] w-[11px] rounded-b-[8px] bg-[#d2d2d2]" />
      <div className="mt-[22px] flex h-[46px] items-center justify-between">
        <div className="text-[30px] font-medium text-[#222]">글꼴</div>
        <div className="pr-[10px] text-[26px] text-[#333]">더 보기</div>
      </div>
      <div className="mt-[17px] flex h-[55px] items-center text-[25px] text-[#222]">
        <div className="flex h-[55px] w-[277px] items-center rounded-[14px] border-2 border-[#e8e8e8] bg-white pl-[16px] pr-[10px]">
          <span className="w-[228px] overflow-hidden whitespace-nowrap">Apple SD Gothic Neo</span>
          <Caret />
        </div>
        <div className="ml-[10px] flex h-[55px] w-[94px] items-center justify-between rounded-[14px] border-2 border-[#e8e8e8] bg-white pl-[16px] pr-[12px]">
          12
          <Caret />
        </div>
        <div className="ml-[21px] text-[33px] font-semibold leading-none text-[#444]">
          A<sup className="text-[20px] font-bold">+</sup>
        </div>
        <div className="ml-[35px] text-[33px] font-semibold leading-none text-[#444]">
          A<sup className="text-[20px] font-bold">-</sup>
        </div>
      </div>
      <FormatRow />
      <AlignRow />
      <div className="mt-[30px] flex h-[28px] items-center gap-[13px]">
        <Checkbox />
        동일한 유형의 주제에 적용
      </div>
      <Divider className="mt-[25px]" />
      <div className="mt-[20px]">
        <Title>주제</Title>
      </div>
      <div className="mt-[11px] flex h-[54px] items-center">
        <span className="w-[68px]">모양</span>
        <div className="flex h-[54px] w-[111px] items-center justify-between rounded-[14px] border-2 border-[#e8e8e8] bg-white pl-[20px] pr-[14px]">
          <span className="h-[24px] w-[37px] border-2 border-dotted border-[#444] [border-bottom-style:solid]" />
          <Chev />
        </div>
        <span className="ml-auto mr-[16px] text-[28px]">둥근 모서리</span>
        <div className="flex h-[54px] w-[111px] items-center justify-between rounded-[14px] border-2 border-[#e8e8e8] bg-white pl-[22px] pr-[14px]">
          <Svg s={28} sw={2.2} c="#333">
            <path d="M2 3H24V27" />
          </Svg>
          <Chev />
        </div>
      </div>
      <div className="mt-[13px] flex h-[54px] items-center">
        <Checkbox on />
        <span className="ml-[13px]">채우기</span>
        <div className="ml-auto flex h-[54px] w-[112px] items-center justify-between rounded-[14px] border-2 border-[#e8e8e8] bg-white pl-[12px] pr-[14px]">
          <span className="flex h-[26px] w-[48px] items-center justify-center border border-[#f0f0f0]">
            <span className="h-[16px] w-[32px] rounded-[2px] bg-[#222]" />
          </span>
          <Chev />
        </div>
        <div className="ml-[17px] flex h-[54px] w-[175px] items-center justify-between rounded-[14px] border-2 border-[#e8e8e8] bg-white pl-[6px] pr-[14px]">
          <span className="h-[40px] w-[121px] rounded-[10px] border border-[#eeeeee]" />
          <Chev />
        </div>
      </div>
      <div className="mt-[27px] flex h-[28px] items-center gap-[13px]">
        <Checkbox />
        그림자
      </div>
      <div className="mt-[29px] flex h-[54px] items-center">
        <Checkbox on />
        <span className="ml-[13px]">너비 설정</span>
        <div className="ml-auto flex h-[54px] w-[175px] items-center rounded-[14px] border-2 border-[#e8e8e8] bg-white pl-[15px] text-[25px] text-[#222]">
          <span className="w-[114px]">352</span>
          <span className="flex h-[38px] w-[40px] flex-col items-center justify-between border-l border-[#dddddd] py-[3px]">
            <span className="rotate-180">
              <Caret w={10} c="#333" />
            </span>
            <Caret w={10} c="#333" />
          </span>
        </div>
      </div>
      <Divider className="mt-[11px]" />
      <div className="mt-[20px]">
        <Title>테두리</Title>
      </div>
      <div className="mt-[10px] flex h-[54px] items-center">
        <Checkbox on />
        <span className="ml-[13px]">테두리 색상</span>
        <div className="ml-auto flex h-[54px] w-[175px] items-center justify-between rounded-[14px] border-2 border-[#e8e8e8] bg-white pl-[6px] pr-[14px]">
          <span className="h-[39px] w-[121px] rounded-[10px] bg-[#444]" />
          <Chev />
        </div>
      </div>
      <div className="mt-[14px] flex h-[54px] items-center">
        <span className="w-[68px]">굵기</span>
        <div className="flex h-[54px] w-[111px] items-center justify-between rounded-[14px] border-2 border-[#e8e8e8] bg-white pl-[12px] pr-[14px]">
          <span className="h-px w-[48px] bg-[#333]" />
          <Chev />
        </div>
        <span className="ml-auto mr-[16px]">대시</span>
        <div className="flex h-[54px] w-[111px] items-center justify-between rounded-[14px] border-2 border-[#e8e8e8] bg-white pl-[12px] pr-[14px]">
          <span className="h-px w-[48px] bg-[#333]" />
          <Chev />
        </div>
      </div>
      <Divider className="mt-[13px]" />
      <div className="mt-[20px]">
        <Title>레이아웃</Title>
      </div>
      <div className="mt-[8px] flex h-[89px] items-center">
        <span>프레임워크</span>
        <div className="ml-auto flex h-[89px] w-[175px] items-center justify-between rounded-[14px] border-2 border-[#e8e8e8] bg-white pl-[18px] pr-[14px]">
          <svg width="68" height="52" viewBox="0 0 68 52" fill="none">
            <rect x="0" y="15" width="28" height="20" rx="4" fill="#ff7433" />
            <path d="M28 25H36M50 6H40C37 6 36 8 36 10V42C36 44 37 46 40 46H50M36 25H50" stroke="#cfcfcf" strokeWidth="2" />
            <rect x="50" y="1" width="17" height="10" rx="3" fill="#cfcfcf" />
            <rect x="50" y="20" width="17" height="10" rx="3" fill="#cfcfcf" />
            <rect x="50" y="41" width="17" height="10" rx="3" fill="#cfcfcf" />
          </svg>
          <Chev />
        </div>
      </div>
      <Divider className="mt-[13px]" />
      <div className="mt-[19px]">
        <Title>브렌치</Title>
      </div>
    </div>
  </div>
);

const BottomBar = () => (
  <div className="flex h-[59px] shrink-0 items-center border-t-[3px] border-[#e3e3e3] bg-linear-to-b from-[#f5f5f5] to-[#dedede] pl-[12px] pr-[20px] text-[#333]">
    <div className="flex w-[48px] justify-center">
      <Svg s={34} sw={2}>
        <path d="M2 4H32M2 15H14M2 23H12M2 31H12" />
        <path d="M24 32C20 27 17 24 17 20C17 16 20 13 24 13C28 13 31 16 31 20C31 24 28 27 24 32Z" />
        <circle cx="24" cy="20" r="2" fill="#444" />
      </Svg>
    </div>
    <div className="flex w-[80px] justify-center">
      <Svg s={34} sw={2}>
        <path d="M2 4V30M32 4V30" />
        <rect x="8" y="3" width="18" height="28" />
      </Svg>
    </div>
    <div className="ml-[2px] h-[42px] w-px bg-[#cfcfcf]" />
    <div className="ml-[8px] flex h-[52px] w-[198px] items-center justify-between rounded-[12px] border-2 border-[#e6e6e6] bg-[#ececec] pl-[13px] pr-[10px] pt-[4px] text-[25px] text-[#222]">
      페이지 1
      <Caret />
    </div>
    <div className="ml-[8px] h-[42px] w-px bg-[#cfcfcf]" />
    <div className="flex w-[108px] justify-center">
      <Svg s={30} sw={2}>
        <path d="M15 2V28M2 15H28" />
      </Svg>
    </div>
    <div className="h-[42px] w-px bg-[#cfcfcf]" />
    <div className="w-[181px] pr-[2px] pt-[4px] text-center text-[27px] font-bold text-[#4fb784]">페이지 1</div>
    <div className="h-[42px] w-[2px] bg-[#c8c8c8]" />

    <div className="relative ml-auto h-full w-[142px]">
      <div className="flex h-[44px] items-center pl-[2px] pt-[8px] text-[25.5px] whitespace-nowrap text-[#333]">
        <svg width="24" height="26" viewBox="0 0 24 26" className="mr-[6px] shrink-0">
          <path d="M4 1H20L24 8L12 26L0 8Z" fill="#f9b233" />
          <path d="M7 9L12 16L17 9" fill="none" stroke="#fff" strokeWidth="2.5" />
        </svg>
        개수: 9/9
      </div>
      <div className="absolute bottom-0 left-0 h-[8px] w-[142px] rounded-t-[4px] bg-[#cacaca]">
        <div className="h-[8px] w-[12px] rounded-full bg-[#4fb784]" />
      </div>
    </div>
    <div className="ml-[14px] flex w-[56px] justify-center">
      <Svg s={30} h={34} sw={2}>
        <rect x="4" y="2" width="22" height="30" rx="11" />
        <path d="M4 14H26M15 2V14" />
        <path d="M15 3C21 3 25 8 25 13H15Z" fill="#444" stroke="none" />
      </Svg>
    </div>
    <div className="flex w-[56px] justify-center">
      <Svg s={32} sw={2}>
        <path d="M2 6L11 3L21 6L30 3V26L21 29L11 26L2 29ZM11 3V26M21 6V29" />
      </Svg>
    </div>
    <div className="flex w-[56px] justify-center">
      <Svg s={32} sw={2}>
        <circle cx="16" cy="16" r="14.5" />
        <path d="M13 10L21 16L13 22Z" />
      </Svg>
    </div>
    <div className="flex w-[56px] justify-center">
      <Svg s={30} h={34} sw={2}>
        <rect x="2" y="2" width="26" height="30" rx="1" />
        <rect x="8" y="10" width="14" height="14" />
        <path d="M7 6H23M7 28H23" />
      </Svg>
    </div>
    <div className="flex w-[56px] justify-center">
      <Svg s={30} h={34} sw={2}>
        <rect x="2" y="2" width="26" height="30" rx="1" />
        <path d="M7 8H11M7 8V12M23 8H19M23 8V12M7 26H11M7 26V22M23 26H19M23 26V22M7 8L12 13M23 8L18 13M7 26L12 21M23 26L18 21" />
      </Svg>
    </div>
    <div className="ml-[7px] flex w-[28px] justify-center">
      <span className="h-[2px] w-[18px] bg-[#444]" />
    </div>
    <div className="relative ml-[5px] flex h-[24px] w-[200px] items-center">
      <div className="h-[5px] w-[57px] rounded-l-full bg-black" />
      <div className="h-[5px] flex-1 rounded-r-full bg-[#d0d0d0]" />
      <div className="absolute left-[45px] top-0 h-[24px] w-[24px] rounded-full border-[4px] border-black bg-white" />
    </div>
    <div className="ml-[7px] flex w-[28px] justify-center">
      <Svg s={24} sw={2}>
        <path d="M12 2V22M2 12H22" />
      </Svg>
    </div>
    <div className="ml-[26px] w-[55px] text-[25px] whitespace-nowrap">111%</div>
    <div className="ml-[18px] flex w-[14px] justify-center">
      <Caret />
    </div>
    <div className="ml-[29px] flex w-[40px] justify-center">
      <Svg s={30} sw={2}>
        <path d="M2 8V2H9M21 2H28V8M2 22V28H9M21 28H28V22" />
      </Svg>
    </div>
    <div className="ml-[29px] flex w-[40px] justify-center">
      <Svg s={30} sw={2}>
        <rect x="2" y="2" width="26" height="26" />
        <path d="M8 15H22M8 15L11 12M8 15L11 18M22 15L19 12M22 15L19 18" />
      </Svg>
    </div>
  </div>
);

const App = () => {
  return (
    <div className="relative flex h-[1542px] w-[2872px] flex-col overflow-hidden bg-white font-['Inter','Noto_Sans_CJK_KR',sans-serif]">
      <TopBar />
      <Ribbon />
      <div className="flex min-h-0 flex-1">
        <div className="relative flex-1 overflow-hidden bg-white">
          <div className="absolute bottom-0 left-0 top-0 w-[2px] bg-[#e3e3e3]" />
          <MindMap />
          <FloatingBar />
          {/* side collapse tab */}
          <div className="absolute right-0 top-0 z-20 flex h-[102px] w-[46px] items-center justify-center rounded-bl-[18px] border-b-2 border-l-2 border-[#e3e3e3] bg-[#f5f5f5]">
            <Svg s={28} sw={2.4}>
              <path d="M9 3L20 14L9 25" />
            </Svg>
          </div>
          {/* scrollbars */}
          <div className="absolute right-[2px] top-[390px] z-20 h-[496px] w-[15px] rounded-[8px] bg-[#d2d2d2]" />
          <div className="absolute bottom-0 left-[727px] h-[18px] w-[843px] rounded-[9px] bg-[#d2d2d2]" />
        </div>
        <RightPanel />
      </div>
      <BottomBar />

      {/* language dropdown */}
      <div className="absolute left-[1674px] top-[213px] z-30 h-[540px] w-[260px] overflow-hidden border-[10px] border-[#ee4026] bg-white shadow-[0_2px_8px_rgba(0,0,0,0.15)]">
        <div className="-mt-[2px]">
          {languages.map((lang) => (
            <div key={lang} className="flex h-[52px] items-center pl-[27px] text-[28px] whitespace-nowrap text-[#333]">
              {lang}
            </div>
          ))}
        </div>
      </div>
    </div>
  );
};

export default App;
